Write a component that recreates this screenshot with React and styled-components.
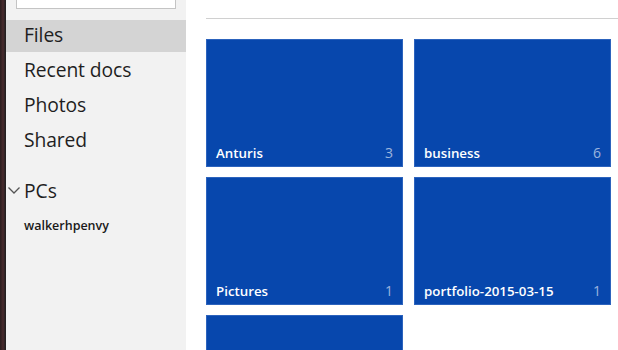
import React from 'react'
import styled, { createGlobalStyle } from 'styled-components'

const Global = createGlobalStyle`
    html, body {
        margin: 0;
        padding: 0;
        background: #ffffff;
        overflow: hidden;
    }
    body {
        font-family: "Open Sans", "Noto Sans", sans-serif;
    }
`

const folders = [
    { name: 'Anturis', count: 3 },
    { name: 'business', count: 6 },
    { name: 'Pictures', count: 1 },
    { name: 'portfolio-2015-03-15', count: 1 },
    { name: '', count: null },
]

const Page = styled.div`
    display: flex;
    width: 618px;
    height: 350px;
    overflow: hidden;
`

const Edge = styled.div`
    width: 6px;
    flex-shrink: 0;
    background: linear-gradient(to right, #2a1d1e 0, #3c2628 2px, #4a2b2e 3px, #2a2224 5px, #1e1e1e 6px);
`

const Sidebar = styled.nav`
    width: 180px;
    flex-shrink: 0;
    background: #f2f2f2;
    display: flex;
    flex-direction: column;
`

const Search = styled.div`
    height: 30px;
    margin: -23px 10px 11px 10px;
    background: #ffffff;
    border: 1px solid #c4c4c4;
`

const NavItem = styled.div`
    box-sizing: border-box;
    height: 32px;
    margin-bottom: 3px;
    padding: 0 0 3px 18px;
    display: flex;
    align-items: center;
    font-size: 19.3px;
    font-weight: 400;
    color: #1f1f1f;
    letter-spacing: -0.1px;
    background: ${p => (p.$active ? '#d4d4d4' : 'transparent')};
`

const Group = styled.div`
    box-sizing: border-box;
    margin-top: 14px;
    height: 34px;
    display: flex;
    align-items: center;
    padding: 0 0 2px 1px;
    font-size: 19.3px;
    color: #1f1f1f;
    gap: 3px;
`

const SubItem = styled.div`
    box-sizing: border-box;
    height: 34px;
    padding: 0 0 0 18px;
    display: flex;
    align-items: center;
    font-size: 12.5px;
    font-weight: 600;
    color: #1a1a1a;
`

const Main = styled.main`
    flex: 1;
    padding: 18px 0 0 20px;
`

const Rule = styled.div`
    height: 1px;
    background: #d0d0d0;
    margin-bottom: 20px;
`

const Grid = styled.div`
    display: grid;
    grid-template-columns: 197px 197px;
    grid-auto-rows: 128px;
    column-gap: 11px;
    row-gap: 10px;
`

const Tile = styled.div`
    box-sizing: border-box;
    background: #0747ad;
    border: 1px solid #2c63bd;
    display: flex;
    align-items: flex-end;
    justify-content: space-between;
    padding: 0 9px 4px 9px;
    color: #ffffff;
    font-size: 13.3px;
    font-weight: 600;
`

const Count = styled.span`
    font-weight: 400;
    font-size: 14px;
    color: rgba(255, 255, 255, 0.6);
`

function Chevron() {
    return (
        <svg width="14" height="14" viewBox="0 0 14 14">
            <path d="M1.5 4.5 L7 10 L12.5 4.5" fill="none" stroke="#555" strokeWidth="1.3" />
        </svg>
    )
}

function App() {
    return (
        <>
            <Global />
            <Page>
                <Edge />
                <Sidebar>
                    <Search />
                    <NavItem $active>Files</NavItem>
                    <NavItem>Recent docs</NavItem>
                    <NavItem>Photos</NavItem>
                    <NavItem>Shared</NavItem>
                    <Group>
                        <Chevron />
                        PCs
                    </Group>
                    <SubItem>walkerhpenvy</SubItem>
                </Sidebar>
                <Main>
                    <Rule />
                    <Grid>
                        {folders.map((f, i) => (
                            <Tile key={i}>
                                <span>{f.name}</span>
                                {f.count !== null && <Count>{f.count}</Count>}
                            </Tile>
                        ))}
                    </Grid>
                </Main>
            </Page>
        </>
    )
}

export default App
